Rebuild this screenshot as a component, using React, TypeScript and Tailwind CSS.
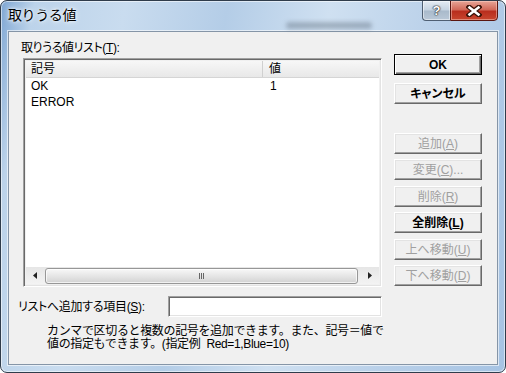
import React from 'react';

const font = "font-['Liberation_Sans','Noto_Sans_CJK_JP',sans-serif] [font-feature-settings:'palt']";

const rows = [
  { key: 'OK', value: '1' },
  { key: 'ERROR', value: '' },
];

const sideButtons = [
  { label: '追加', acc: 'A', tail: ')', enabled: false, mt: 'mt-[29px]' },
  { label: '変更', acc: 'C', tail: ')...', enabled: false, mt: 'mt-[5px]' },
  { label: '削除', acc: 'R', tail: ')', enabled: false, mt: 'mt-[6px]' },
  { label: '全削除', acc: 'L', tail: ')', enabled: true, mt: 'mt-[5px]' },
  { label: '上へ移動', acc: 'U', tail: ')', enabled: false, mt: 'mt-[6px]' },
  { label: '下へ移動', acc: 'D', tail: ')', enabled: false, mt: 'mt-[5px]' },
];

function Btn({ children, enabled = true, isDefault = false, className = '' }: { children: React.ReactNode; enabled?: boolean; isDefault?: boolean; className?: string }) {
  const edge = isDefault
    ? 'border border-black shadow-[inset_1px_1px_0_#ffffff,inset_-1px_-1px_0_#696969,inset_-2px_-2px_0_#a0a0a0]'
    : 'border border-t-white border-l-white border-r-[#696969] border-b-[#696969] shadow-[inset_-1px_-1px_0_#a0a0a0,inset_1px_1px_0_#e3e3e3]';
  return (
    <div
      className={`w-[88px] h-[21px] flex items-center justify-center bg-[#f0f0f0] text-[12px] leading-none ${edge} ${
        enabled ? 'text-black font-bold' : 'text-[#a0a0a0]'
      } ${className}`}
    >
      {children}
    </div>
  );
}

function Arrow({ dir }: { dir: 'left' | 'right' }) {
  return (
    <div className="w-[18px] h-full flex items-center justify-center">
      <svg width="4" height="7" viewBox="0 0 4 7">
        {dir === 'left' ? <path d="M4 0 L0 3.5 L4 7 Z" fill="#222" /> : <path d="M0 0 L4 3.5 L0 7 Z" fill="#222" />}
      </svg>
    </div>
  );
}

export default function App() {
  return (
    <div className={`w-[506px] h-[373px] relative overflow-hidden rounded-[7px] border border-[#2f3c4b] bg-[linear-gradient(100deg,#7ea6d3_0%,#bcd3ea_6%,#c9dcef_22%,#b4cde7_40%,#cfe0f1_58%,#b9d0e9_78%,#a6c3e3_100%)] shadow-[inset_0_0_0_1px_rgba(255,255,255,0.55)] flex flex-col ${font}`}>
      {/* blurred thing behind the glass */}
      <div className="absolute left-[285px] top-[21px] w-[86px] h-[7px] rounded-full bg-[#5a6878]/40 blur-[2px]" />

      <div className="h-[30px] flex items-start relative">
        <div className="pl-[7px] pt-[5px] text-[14px] leading-[18px] text-black [font-feature-settings:normal] tracking-[-0.4px] [text-shadow:0_0_6px_#fff,0_0_3px_#fff]">取りうる値</div>
        <div className="ml-auto mr-[7px] flex -mt-px">
          <div className="w-[28px] h-[21px] rounded-bl-[4px] border border-[#4f5f72] border-r-0 bg-[linear-gradient(#e4ecf4_0%,#c5d3e1_48%,#a9bacb_52%,#b9c8d7_100%)] shadow-[inset_0_0_0_1px_rgba(255,255,255,0.5)] flex items-center justify-center">
            <span className="text-[13px] font-bold text-white leading-none [text-shadow:0_0_1px_#222,0_0_1px_#222,0_0_2px_#333]">?</span>
          </div>
          <div className="w-[48px] h-[21px] rounded-br-[4px] border border-[#5a1610] bg-[linear-gradient(#e7a597_0%,#d26a5a_45%,#b92e1e_55%,#c8462e_100%)] shadow-[inset_0_0_0_1px_rgba(255,220,210,0.45)] flex items-center justify-center">
            <svg width="16" height="12" viewBox="0 0 16 12">
              <path d="M3 2 L13 10 M13 2 L3 10" stroke="#3a1208" strokeWidth="5" strokeLinecap="square" />
              <path d="M3.5 2.5 L12.5 9.5 M12.5 2.5 L3.5 9.5" stroke="#fff" strokeWidth="2.6" strokeLinecap="square" />
            </svg>
          </div>
        </div>
      </div>

      <div className="mx-[7px] w-[490px] h-[334px] border border-[#8595a7] shadow-[0_0_0_1px_rgba(255,255,255,0.6)] bg-[#f0f0f0] pt-[8px] pl-[9px] text-black text-[12px]">
        <div className="flex">
          <div className="flex flex-col">
            <div className="ml-[3px] h-[16px] leading-[16px] tracking-[-0.4px]">
              取りうる値リスト(<span className="underline">T</span>):
            </div>
            <div className="ml-[5px] mt-[2px] w-[359px] h-[229px] border border-t-[#a0a0a0] border-l-[#a0a0a0] border-r-white border-b-white shadow-[inset_1px_1px_0_#696969,inset_-1px_-1px_0_#e3e3e3] p-[2px] flex">
              <div className="flex-1 bg-white flex flex-col">
                <div className="h-[17px] flex bg-[linear-gradient(#f7f7f7,#e8e8e8)] border-b border-[#d5d5d5]">
                  <div className="w-[237px] pl-[5px] leading-[16px] border-r border-[#d0d0d0]">記号</div>
                  <div className="pl-[6px] leading-[16px]">値</div>
                </div>
                <div className="flex-1">
                  {rows.map((r) => (
                    <div key={r.key} className="h-[16px] flex leading-[16px]">
                      <div className="w-[238px] pl-[5px]">{r.key}</div>
                      <div className="pl-[6px]">{r.value}</div>
                    </div>
                  ))}
                </div>
                <div className="h-[17px] flex bg-[linear-gradient(#e6e6e6,#f3f3f3)]">
                  <Arrow dir="left" />
                  <div className="flex-1 flex items-center">
                    <div className="ml-[1px] w-[313px] h-[16px] rounded-[3px] border border-[#979797] bg-[linear-gradient(#f8f8f8_0%,#e6e6e6_50%,#d2d2d2_100%)] shadow-[inset_0_0_0_1px_rgba(255,255,255,0.7)] flex items-center justify-center">
                      <div className="flex gap-[1px]">
                        <div className="w-[1px] h-[6px] bg-[#666]" />
                        <div className="w-[1px] h-[6px] bg-[#666]" />
                        <div className="w-[1px] h-[6px] bg-[#666]" />
                      </div>
                    </div>
                  </div>
                  <Arrow dir="right" />
                </div>
              </div>
            </div>
          </div>

          <div className="ml-[12px] mt-[14px] flex flex-col">
            <Btn isDefault>OK</Btn>
            <Btn className="mt-[8px]">キャンセル</Btn>
            {sideButtons.map((b) => (
              <Btn key={b.acc} enabled={b.enabled} className={b.mt}>
                <span>
                  {b.label}(<span className="underline">{b.acc}</span>
                  {b.tail}
                </span>
              </Btn>
            ))}
          </div>
        </div>

        <div className="flex items-center mt-[9px]">
          <div className="w-[150px] leading-[16px] tracking-[-0.3px]">
            リストへ追加する項目(<span className="underline">S</span>):
          </div>
          <div className="w-[214px] h-[21px] bg-white border border-t-[#a0a0a0] border-l-[#a0a0a0] border-r-white border-b-white shadow-[inset_1px_1px_0_#696969,inset_-1px_-1px_0_#e3e3e3]" />
        </div>

        <div className="ml-[29px] mt-[8px] leading-[13px] [font-feature-settings:normal] tracking-[-0.35px]">
          <div>カンマで区切ると複数の記号を追加できます。また、記号＝値で</div>
          <div>値の指定もできます。(指定例&nbsp;&nbsp;Red=1,Blue=10)</div>
        </div>
      </div>
    </div>
  );
}
